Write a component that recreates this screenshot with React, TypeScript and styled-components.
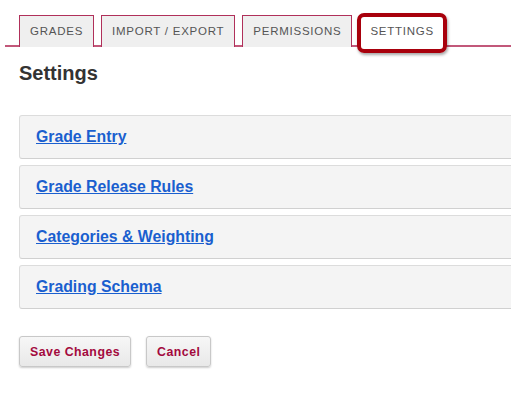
import React from 'react'
import styled, { createGlobalStyle } from 'styled-components'

const GlobalStyle = createGlobalStyle`
  html, body {
    margin: 0;
    padding: 0;
    background: #fff;
    font-family: "Liberation Sans", Arial, sans-serif;
  }
`

const Page = styled.div`
  width: 511px;
  height: 413px;
  overflow: hidden;
  padding-top: 15px;
  box-sizing: border-box;
`

const TabBar = styled.div`
  display: flex;
  align-items: flex-end;
  gap: 7px;
  margin-left: 5px;
  padding-left: 14px;
  height: 30px;
  border-bottom: 2px solid #c2587a;
`

const Tab = styled.div<{ $active?: boolean }>`
  position: relative;
  box-sizing: border-box;
  height: 32px;
  margin-bottom: -2px;
  padding: 0 10px 2px;
  display: flex;
  align-items: center;
  background: ${(p) => (p.$active ? '#fff' : '#efefef')};
  border: 1px solid ${(p) => (p.$active ? 'transparent' : '#b0305a')};
  border-bottom: none;
  color: #555;
  font-size: 11.5px;
  letter-spacing: 0.75px;
  text-transform: uppercase;
`

const Highlight = styled.div`
  position: absolute;
  left: -3px;
  right: -3px;
  top: -3px;
  bottom: -6px;
  border: 4px solid #a8000c;
  border-radius: 7px;
  box-shadow: 1px 2px 3px rgba(0, 0, 0, 0.35);
  pointer-events: none;
`

const Content = styled.div`
  padding: 0 0 0 19px;
`

const Title = styled.h1`
  margin: 14px 0 0;
  font-size: 20px;
  font-weight: bold;
  color: #333;
  line-height: 24px;
`

const Panels = styled.div`
  margin-top: 30px;
  display: flex;
  flex-direction: column;
  gap: 6px;
`

const Panel = styled.div`
  box-sizing: border-box;
  height: 44px;
  margin-right: -10px;
  background: #f4f4f4;
  border: 1px solid #dcdcdc;
  border-bottom-color: #d0d0d0;
  border-radius: 3px;
  display: flex;
  align-items: center;
  padding-left: 16px;
`

const PanelLink = styled.a`
  color: #1a5fcf;
  font-size: 15.8px;
  font-weight: bold;
  text-decoration: underline;
  cursor: pointer;
`

const Actions = styled.div`
  display: flex;
  gap: 15px;
  margin-top: 27px;
`

const Button = styled.button`
  box-sizing: border-box;
  height: 31px;
  padding: 0 10px;
  background: linear-gradient(#f7f7f7, #e8e8e8);
  border: 1px solid #c8c8c8;
  border-radius: 3px;
  box-shadow: 0 1px 2px rgba(0, 0, 0, 0.2);
  color: #a3093d;
  font-family: "Liberation Sans", Arial, sans-serif;
  font-size: 12.3px;
  font-weight: bold;
  letter-spacing: 0.5px;
`

const tabs = ['Grades', 'Import / Export', 'Permissions', 'Settings']
const sections = ['Grade Entry', 'Grade Release Rules', 'Categories & Weighting', 'Grading Schema']

export default function App() {
  return (
    <Page>
      <GlobalStyle />
      <TabBar>
        {tabs.map((t) => (
          <Tab key={t} $active={t === 'Settings'}>
            {t}
            {t === 'Settings' && <Highlight />}
          </Tab>
        ))}
      </TabBar>
      <Content>
        <Title>Settings</Title>
        <Panels>
          {sections.map((s) => (
            <Panel key={s}>
              <PanelLink>{s}</PanelLink>
            </Panel>
          ))}
        </Panels>
        <Actions>
          <Button>Save Changes</Button>
          <Button>Cancel</Button>
        </Actions>
      </Content>
    </Page>
  )
}
